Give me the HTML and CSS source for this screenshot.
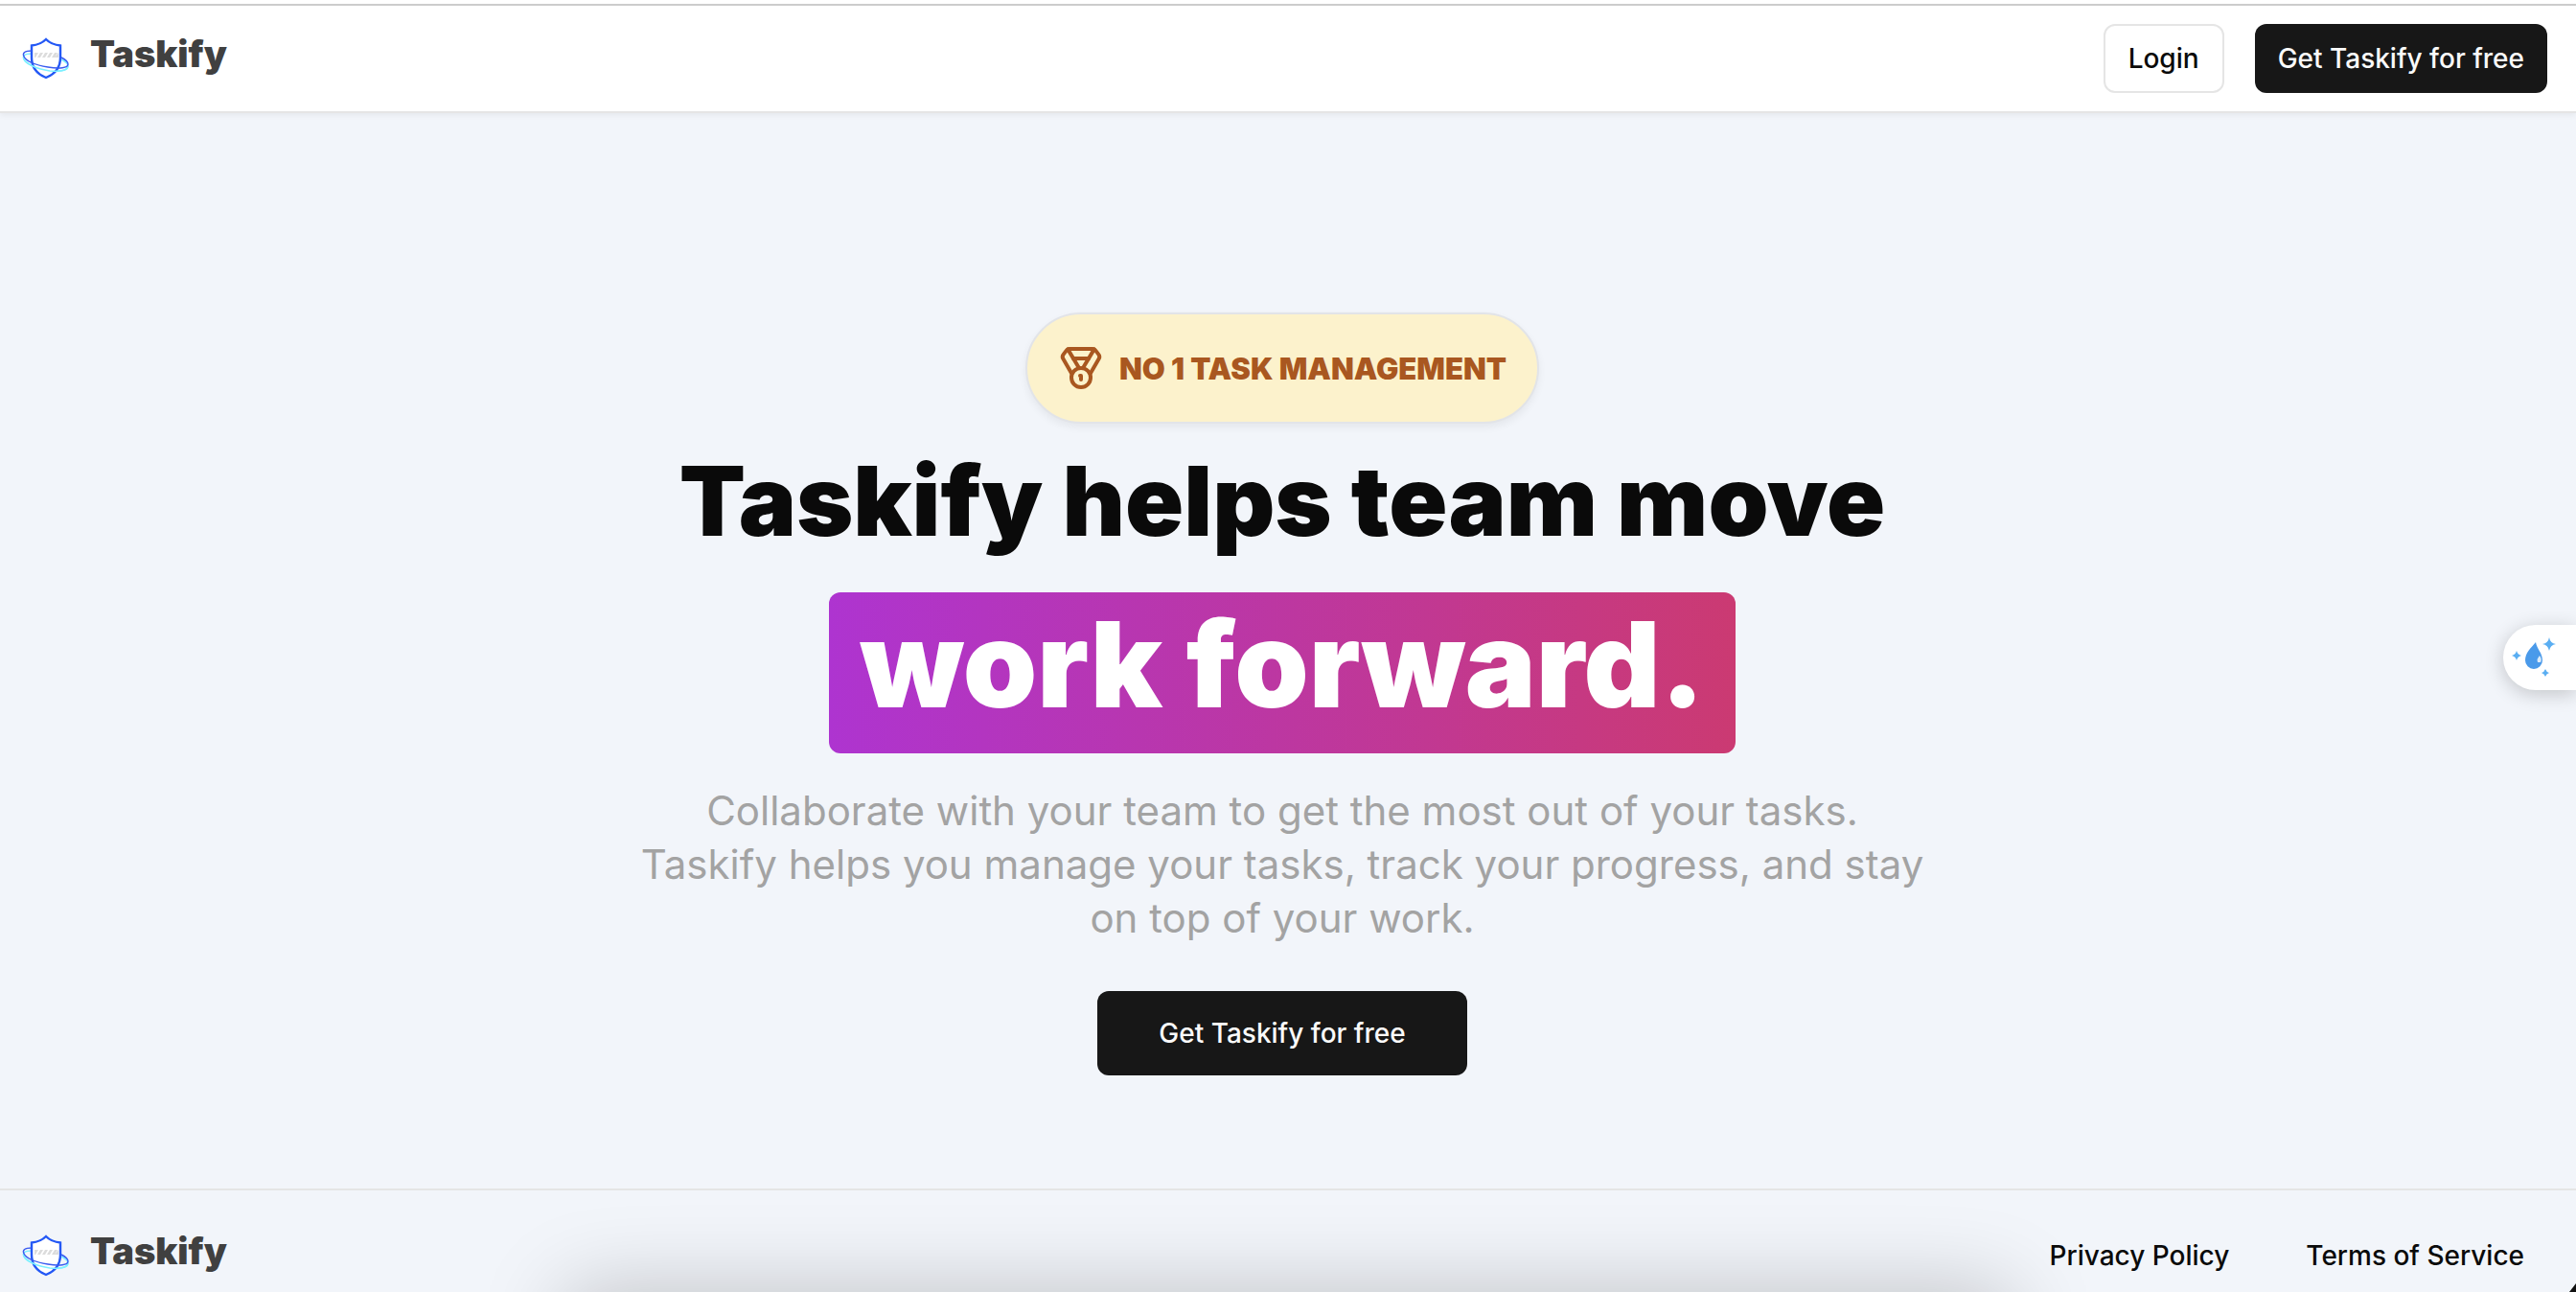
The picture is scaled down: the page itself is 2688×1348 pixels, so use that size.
FILE: index.html
```html
<!DOCTYPE html>
<html lang="en">
<head>
<meta charset="utf-8">
<meta name="viewport" content="width=device-width, initial-scale=1">
<title>Taskify</title>
<link rel="stylesheet" href="styles.css">
</head>
<body>
<svg class="sprite" aria-hidden="true">
  <symbol id="logo" viewBox="0 0 52 46">
    <path d="M11 18C4 18 1 20 3 24C6 30 16 33 28 35C40 37 49 36 49 31C49 28 46 26 42 24" fill="none" stroke="#7df0ff" stroke-width="1.5"/>
    <path d="M26 3C30 7 35 9 41 9.500V22C41 32 36 39 26 43C16 39 11 32 11 22V9.500C16 9 22 7 26 3Z" fill="#fff" stroke="#2458f5" stroke-width="2.400"/>
    <path d="M14 17h4l-3 5h-1zM20 17h3l-3 5h-3zM25 17h3l-3 5h-3zM30 17h3l-3 5h-3zM35 17h3l-3 5h-3zM39 17v5h-4z" fill="#dcdcdc"/>
    <path d="M3 24C8 31 18 34 30 36C40 37 48 36 49 31" fill="none" stroke="#7df0ff" stroke-width="1.500"/>
    <path d="M11 15C4 15 1 17 3 21C6 27 16 30 28 32C40 34 49 33 49 29C49 26 46 24 42 22" fill="none" stroke="#3a5cf0" stroke-width="1.400"/>
  </symbol>
</svg>

<header class="navbar">
  <a class="brand" href="#">
    <svg class="brand-icon" aria-hidden="true"><use href="#logo"/></svg>
    <span class="brand-name">Taskify</span>
  </a>
  <nav class="nav-actions">
    <button class="btn btn-outline" type="button">Login</button>
    <button class="btn btn-dark" type="button">Get Taskify for free</button>
  </nav>
</header>

<main class="hero">
  <div class="badge">
    <svg class="badge-icon" viewBox="0 0 24 24" aria-hidden="true">
      <path d="M7.210 15 2.660 7.140a2 2 0 0 1 .13-2.200L4.400 2.800A2 2 0 0 1 6 2h12a2 2 0 0 1 1.600.8l1.600 2.140a2 2 0 0 1 .14 2.200L16.790 15"/>
      <path d="M11 12 5.120 2.200"/><path d="m13 12 5.880-9.800"/><path d="M8 7h8"/>
      <circle cx="12" cy="17" r="5"/><path d="M12 18v-2h-.5"/>
    </svg>
    <span>NO 1 TASK MANAGEMENT</span>
  </div>
  <h1 class="title">Taskify helps team move</h1>
  <div class="highlight">work forward.</div>
  <p class="lead">Collaborate with your team to get the most out of your tasks.<br>Taskify helps you manage your tasks, track your progress, and stay<br>on top of your work.</p>
  <button class="btn btn-dark btn-large" type="button">Get Taskify for free</button>
</main>

<footer class="footer">
  <a class="brand" href="#">
    <svg class="brand-icon" aria-hidden="true"><use href="#logo"/></svg>
    <span class="brand-name">Taskify</span>
  </a>
  <nav class="footer-links">
    <a class="btn" href="#">Privacy Policy</a>
    <a class="btn" href="#">Terms of Service</a>
  </nav>
</footer>

<div class="dock-shadow"></div>
<div class="corner"></div>
<button class="side-widget" type="button" aria-label="Assistant">
  <svg class="side-icon" viewBox="0 0 48 44" aria-hidden="true">
    <path d="M26 6C27 13 33 17 33 25A9 9 0 0 1 15 25C15 17 21 12 26 6Z" fill="#4a9aea"/>
    <path d="M30 20q3 4 1 7h-3q-1-3 0-4z" fill="#dcebfa"/>
    <path d="M40 1q1 6 7 7q-6 1-7 7q-1-6-7-7q6-1 7-7zM6 15q1 4 5 5q-4 1-5 5q-1-4-5-5q4-1 5-5zM36 34q1 3 4 4q-3 1-4 4q-1-3-4-4q3-1 4-4z" fill="#5aaef2"/>
  </svg>
</button>
</body>
</html>
```
FILE: styles.css
```css
* { box-sizing: border-box; }

body {
  margin: 0;
  min-height: 100vh;
  display: flex;
  flex-direction: column;
  overflow: hidden;
  background: #f2f5fa;
  color: #0a0a0a;
  font-family: Inter, "Liberation Sans", sans-serif;
  border-top: 4px solid #fff;
}

.sprite { display: none; }

.navbar,
.footer {
  display: flex;
  align-items: center;
  justify-content: space-between;
  padding: 0 30px 0 22px;
}

.navbar {
  height: 114px;
  background: #fff;
  border-top: 2px solid #ccc;
  border-bottom: 2px solid #e5e5e5;
  box-shadow: 0 2px 6px rgba(0, 0, 0, .06);
}

.brand {
  display: flex;
  align-items: center;
  gap: 20px;
  color: #404040;
  text-decoration: none;
}

.brand-icon { width: 52px; height: 46px; }

.brand-name {
  padding-bottom: 10px;
  font-size: 38px;
  line-height: 40px;
  font-weight: 900;
}

.nav-actions { display: flex; gap: 32px; }

.btn {
  display: inline-flex;
  align-items: center;
  justify-content: center;
  height: 72px;
  padding: 0 24px;
  border: 0;
  border-radius: 12px;
  background: none;
  color: #0a0a0a;
  font: 500 28px/40px Inter, "Liberation Sans", sans-serif;
  text-decoration: none;
  white-space: nowrap;
}

.btn-outline { border: 2px solid #e5e5e5; background: #fff; }

.btn-dark { background: #171717; color: #fafafa; }

.btn-large { height: 88px; padding: 0 64px; margin-top: 48px; }

.hero {
  flex: 1;
  display: flex;
  flex-direction: column;
  align-items: center;
  justify-content: center;
  padding: 90px 12px 0 0;
  text-align: center;
}

.badge {
  display: flex;
  align-items: center;
  gap: 16px;
  height: 116px;
  padding: 0 32px;
  border: 2px solid #e2e4e8;
  border-radius: 58px;
  background: #fcf2cc;
  color: #a95720;
  box-shadow: 0 4px 8px rgba(0, 0, 0, .06);
  font-size: 31px;
  font-weight: 900;
  white-space: nowrap;
}

.badge-icon {
  width: 48px;
  height: 48px;
  fill: none;
  stroke: currentColor;
  stroke-width: 2;
  stroke-linecap: round;
  stroke-linejoin: round;
}

.title {
  margin: 20px 0 36px;
  font-size: 101px;
  line-height: 120px;
  font-weight: 900;
}

.highlight {
  height: 168px;
  padding: 0 32px;
  border-radius: 12px;
  background: linear-gradient(to right, #ae34d0, #cb3a72);
  color: #fff;
  font-size: 124px;
  line-height: 150px;
  font-weight: 900;
}

.lead {
  margin: 32px 0 0;
  color: #a3a3a3;
  font-size: 42px;
  line-height: 56px;
}

.footer {
  border-top: 2px solid #e5e5e5;
  padding-top: 32px;
  padding-bottom: 2px;
}

.footer-links { display: flex; gap: 32px; }

.dock-shadow {
  position: fixed;
  top: 100%;
  left: 22%;
  right: 22%;
  height: 200px;
  box-shadow: 0 0 90px rgba(0, 0, 0, .22);
}

.corner {
  position: fixed;
  right: 0;
  bottom: 0;
  width: 7px;
  height: 9px;
  background: #111;
  clip-path: polygon(100% 0, 100% 100%, 0 100%);
}

.side-widget {
  position: fixed;
  top: 652px;
  right: 0;
  width: 76px;
  height: 68px;
  padding: 0 0 0 8px;
  border: 0;
  border-radius: 34px 0 0 34px;
  background: #fff;
  box-shadow: 0 4px 20px rgba(0, 0, 0, .2);
  text-align: left;
}

.side-icon { display: block; width: 48px; height: 44px; }
```
